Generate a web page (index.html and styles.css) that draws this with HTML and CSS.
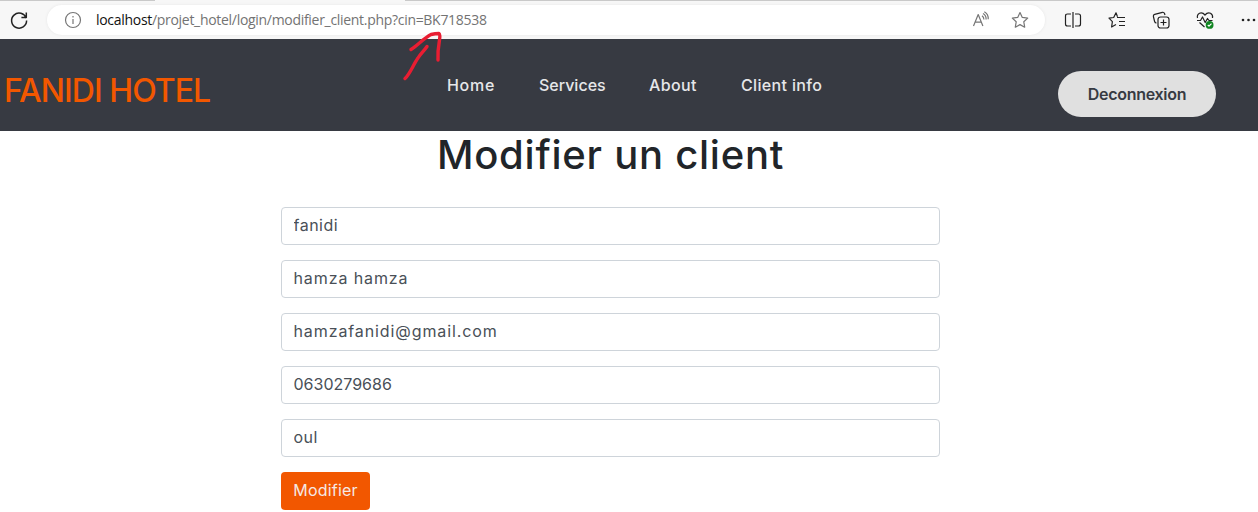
FILE: index.html
```html
<!DOCTYPE html>
<html lang="fr">
<head>
<meta charset="utf-8">
<title>Modifier un client</title>
<link rel="stylesheet" href="styles.css">
</head>
<body>
<div class="toolbar">
  <svg class="reload" width="20" height="20" viewBox="0 0 20 20"><path d="M17.2 8.2A7.5 7.5 0 1 0 17.6 10.6M17.3 2.5V7.4H12.4"/></svg>
  <div class="address">
    <svg class="info" width="18" height="18" viewBox="0 0 18 18"><circle cx="9" cy="9" r="7.5"/><path d="M9 8v5M9 5v1.5"/></svg>
    <div class="url"><span class="host">localhost</span>/projet_hotel/login/modifier_client.php?cin=BK718538</div>
    <svg class="read" width="18" height="18" viewBox="0 0 18 18"><path d="M1.5 15L6.2 3.5L10.900 15M3.100 11.200H9.300M10 4.700Q12 6 11.900 8.500M11 2.500Q14.400 4.500 14.100 8.500M12.300.700Q16.600 3 16.200 8.200"/></svg>
    <svg class="star" width="18" height="18" viewBox="0 0 18 18"><path d="M9 1.5L11.3 6.4L16.7 7.1L12.8 10.8L13.7 16.2L9 13.6L4.3 16.2L5.2 10.8L1.3 7.1L6.7 6.4Z"/></svg>
  </div>
  <div class="tools">
    <svg width="18" height="18" viewBox="0 0 18 18"><path d="M7 3H3.5Q1.5 3 1.5 5V13Q1.5 15 3.5 15H7M11 3H14.5Q16.500 3 16.500 5V13Q16.500 15 14.500 15H11M9 1V17"/></svg>
    <svg width="18" height="18" viewBox="0 0 18 18"><path d="M9.500 5.800L8 1.800L5.700 6.500L1 7.200L4.400 10.600L3.600 16L8 13.500M9 6.500H17M11 10.500H17M11 14.500H17"/></svg>
    <svg width="18" height="18" viewBox="0 0 18 18"><rect x="6" y="6" width="11" height="11" rx="2.500"/><path d="M11.500 8.500V14.500M8.500 11.500H14.500M13 4L12.500 2.500Q12 1 10.400 1.300L2.700 3.300Q1 3.800 1.400 5.500L2.600 10.500Q3 12 4.500 12"/></svg>
    <svg width="18" height="18" viewBox="0 0 18 18"><path d="M1.500 7Q.7 3.700 3.500 2.200Q6.500.9 9 4Q11.500.9 14.500 2.200Q17.200 3.700 16.500 7M1 9.500H4.500L6.500 6L9.200 11.500L11.500 7.500L13 9.500H16.500M3.500 11.500L8.500 16"/><circle class="health" cx="13.600" cy="13.900" r="3.900"/><path class="check" d="M11.800 14L13 15.200L15.500 12.700"/></svg>
    <svg width="18" height="18" viewBox="0 0 18 18"><g class="dots"><circle cx="3" cy="9" r="1.300"/><circle cx="8.500" cy="9" r="1.300"/><circle cx="14" cy="9" r="1.300"/></g></svg>
  </div>
</div>
<header class="header">
  <div class="brand">FANIDI HOTEL</div>
  <nav class="nav"><a class="home">Home</a><a class="services">Services</a><a class="about">About</a><a class="info-link">Client info</a></nav>
  <button class="logout">Deconnexion</button>
</header>
<main class="content">
  <h1 class="title">Modifier un client</h1>
  <form class="form">
    <input class="field" value="fanidi">
    <input class="field wide" value="hamza hamza">
    <input class="field wide" value="hamzafanidi@gmail.com">
    <input class="field phone" value="0630279686">
    <input class="field" value="oul">
    <button class="submit" type="button">Modifier</button>
  </form>
</main>
<svg class="arrow" width="46" height="52" viewBox="400 30 46 52"><path d="M405 78.500C410 74 413 65 418 58C421 53 424 51 427 46.500M411 49.500C418 45 424 38 431 34.500C434 33.800 437 33.500 439 33.500C442 36 437 44 438 60"/></svg>
</body>
</html>
```

FILE: styles.css
```css
* { box-sizing: border-box; }
body { margin: 0; height: 512px; overflow: hidden; background: #fff; font-family: Inter, sans-serif; font-size: 16px; }
svg { display: block; flex: none; fill: none; stroke: #222; stroke-width: 1.2; stroke-linejoin: round; }
.toolbar { height: 39px; display: flex; align-items: center; padding: 1px 0 0 9px; background: linear-gradient(90deg, #c9c9c9 155px, #f7f7f7 155px 405px, #c9c9c9 405px) 0 0 / 100% 1px no-repeat #f7f7f7; }
.reload { stroke-width: 1.5; }
.address { width: 998px; height: 30px; margin-left: 18px; padding: 0 16px 0 17px; display: flex; align-items: center; background: #fff; border-radius: 15px; box-shadow: 0 0 3px #e6e6e6; }
.address svg { stroke: #767676; }
.url { margin-left: 14px; flex: 1; font: 14px/20px "Open Sans", sans-serif; letter-spacing: -.3px; color: #737373; white-space: nowrap; }
.host { color: #111; }
.star { margin-left: 21px; }
.tools { display: flex; gap: 26px; margin-left: 19px; }
.tools .health { fill: #118522; stroke: none; }
.tools .check { stroke: #fff; }
.dots { fill: #222; stroke: none; }
.header { height: 92px; display: flex; align-items: flex-start; background: #373a42; padding-left: 4px; }
.brand { width: 443px; padding-top: 28px; font-size: 32px; line-height: 48px; font-weight: 500; letter-spacing: -.95px; color: #f25700; white-space: nowrap; }
.nav { display: flex; width: 611px; padding-top: 34px; line-height: 24px; font-weight: 500; color: #e6e7e9; white-space: nowrap; }
.home { width: 92px; letter-spacing: .7px; }
.services { width: 110px; }
.about { width: 92px; letter-spacing: .35px; }
.info-link { letter-spacing: .35px; }
.logout { width: 158px; height: 46px; margin-top: 32px; padding: 0; border: 0; border-radius: 23px; background: #e0e0e0; color: #373a42; font: 600 16px Inter, sans-serif; letter-spacing: -.3px; }
.content { width: 659px; margin-left: 281px; }
.title { margin: 0 0 28px; font-size: 40px; line-height: 48px; font-weight: 500; letter-spacing: .75px; color: #212529; text-align: center; white-space: nowrap; }
.form { display: flex; flex-direction: column; align-items: flex-start; gap: 15px; }
.field { width: 100%; height: 38px; padding: 0 11.5px 2px; border: 1px solid #ced4da; border-radius: 4px; font: 16px Inter, sans-serif; letter-spacing: .5px; color: #495057; background: #fff; }
.wide { letter-spacing: .9px; }
.phone { letter-spacing: 0; }
.submit { width: 89px; height: 38px; padding: 0 0 2px; border: 0; border-radius: 4px; background: #f25700; color: #f5e9e4; font: 16px Inter, sans-serif; letter-spacing: .2px; }
.arrow { position: absolute; left: 400px; top: 30px; stroke: #e91d32; stroke-width: 3.4; stroke-linecap: round; }
```
